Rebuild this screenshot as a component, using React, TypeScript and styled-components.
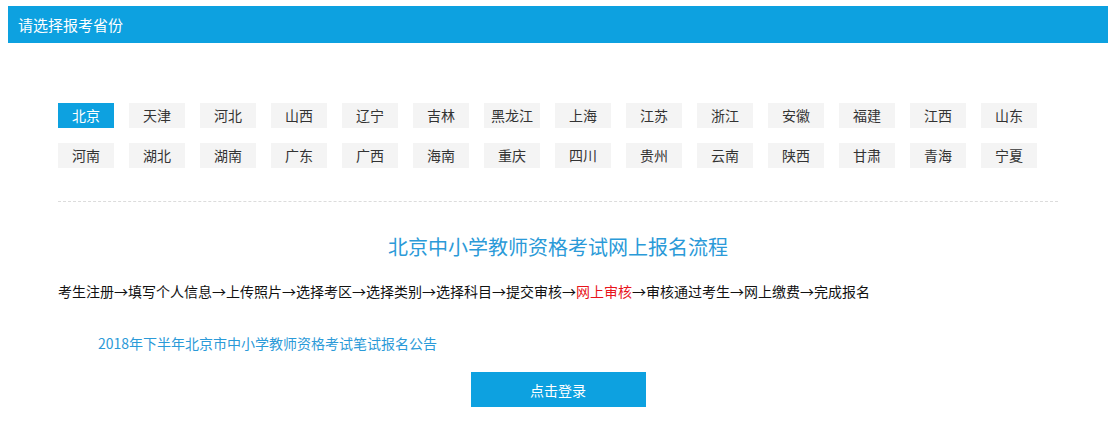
import React, { useState } from 'react';
import styled, { createGlobalStyle } from 'styled-components';

const GlobalStyle = createGlobalStyle`
  body {
    margin: 0;
    background: #fff;
    font-family: "Noto Sans CJK SC", "Liberation Sans", sans-serif;
  }
`;

const Page = styled.div`
  width: 1100px;
  padding: 6px 0 0 8px;
`;

const TitleBar = styled.div`
  height: 37px;
  background-color: #0da1e0;
  color: #fff;
  font-size: 15px;
  line-height: 37px;
  padding-left: 10px;
`;

const Content = styled.div`
  width: 1000px;
  margin: 0 auto;
`;

const Provinces = styled.div`
  display: flex;
  flex-wrap: wrap;
  row-gap: 15px;
  padding-top: 60px;
  padding-bottom: 33px;
  border-bottom: 1px dashed #dcdcdc;
`;

const ProvinceTab = styled.a<{ $active?: boolean }>`
  width: 56px;
  height: 25px;
  margin-right: 15px;
  line-height: 25px;
  text-align: center;
  font-size: 14px;
  cursor: pointer;
  background-color: ${p => (p.$active ? '#0da1e0' : '#f4f4f4')};
  color: ${p => (p.$active ? '#fff' : '#333')};
`;

const Heading = styled.h2`
  margin: 30px 0 0;
  text-align: center;
  font-size: 20px;
  font-weight: normal;
  line-height: 30px;
  color: #2b9ad8;
`;

const Steps = styled.p`
  margin: 19px 0 0;
  font-size: 14px;
  line-height: 20px;
  color: #111;
`;

const Highlight = styled.span`
  color: #e8141b;
`;

const Notice = styled.a`
  display: block;
  margin: 32px 0 0 40px;
  font-size: 14px;
  line-height: 20px;
  color: #2b9ad8;
  text-decoration: none;
`;

const LoginButton = styled.button`
  display: block;
  width: 175px;
  height: 35px;
  margin: 19px auto 0;
  border: none;
  background-color: #0da1e0;
  color: #fff;
  font-family: inherit;
  font-size: 14px;
  cursor: pointer;
`;

const provinces = [
  '北京', '天津', '河北', '山西', '辽宁', '吉林', '黑龙江', '上海', '江苏', '浙江', '安徽', '福建', '江西', '山东',
  '河南', '湖北', '湖南', '广东', '广西', '海南', '重庆', '四川', '贵州', '云南', '陕西', '甘肃', '青海', '宁夏',
];

const App: React.FC = () => {
  const [selected, setSelected] = useState('北京');

  return (
    <Page>
      <GlobalStyle />
      <TitleBar>请选择报考省份</TitleBar>
      <Content>
        <Provinces>
          {provinces.map(name => (
            <ProvinceTab key={name} $active={name === selected} onClick={() => setSelected(name)}>
              {name}
            </ProvinceTab>
          ))}
        </Provinces>
        <Heading>{selected}中小学教师资格考试网上报名流程</Heading>
        <Steps>
          考生注册→填写个人信息→上传照片→选择考区→选择类别→选择科目→提交审核→<Highlight>网上审核</Highlight>→审核通过考生→网上缴费→完成报名
        </Steps>
        <Notice href="#">2018年下半年{selected}市中小学教师资格考试笔试报名公告</Notice>
        <LoginButton>点击登录</LoginButton>
      </Content>
    </Page>
  );
};

export default App;
